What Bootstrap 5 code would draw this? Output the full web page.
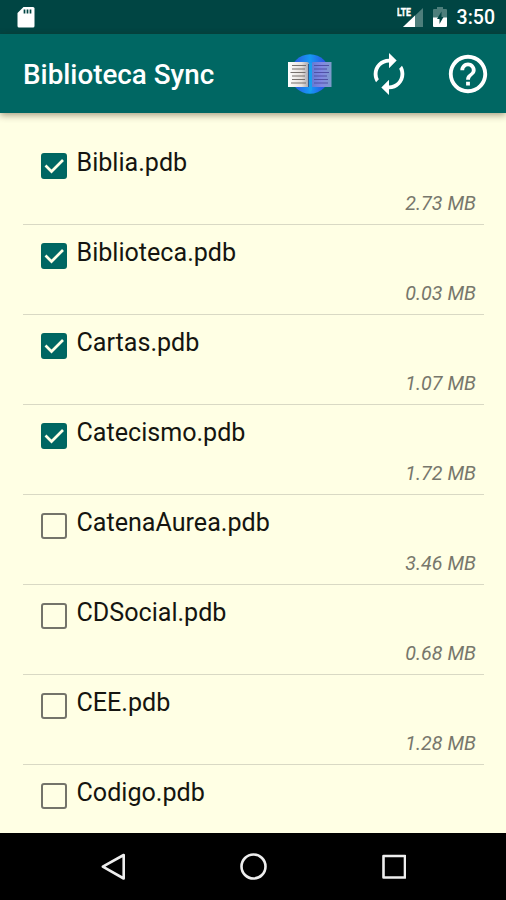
<!DOCTYPE html>
<html lang="es">
<head>
<meta charset="utf-8">
<meta name="viewport" content="width=device-width, initial-scale=1">
<title>Biblioteca Sync</title>
<link href="https://cdn.jsdelivr.net/npm/bootstrap@5.3.0/dist/css/bootstrap.min.css" rel="stylesheet">
<style>
body{font-family:Roboto,sans-serif;background:#ffffe4;height:900px}
svg{display:block;flex:none}
.status-bar{height:34px;background:#004543;padding:0 11px 0 17px}
.clock{font-size:19.5px;font-weight:500;line-height:34px;margin-left:9px;padding-top:2px}
.app-bar{height:79px;background:#006763;padding:0 15px 0 23px;z-index:1;box-shadow:0 2px 7px rgba(50,30,0,.45)}
.app-title{font-size:27.8px;font-weight:500;line-height:32px;padding-top:3px}
.refresh-icon{margin-left:33px}
.help-icon{margin-left:33px}
.file-list{padding:22px 22px 0 23px}
.file-row{height:90px;border-bottom:1px solid #d9d9c4;padding:10px 8px 0 17px}
.tick{appearance:none;width:26px;height:26px;margin:8px 9.5px 0 1px;border:2px solid #74746a;border-radius:3px;flex:none;background:center/24px 24px no-repeat}
.tick:checked{border-color:#00665f;background-color:#006763;background-image:url("data:image/svg+xml,%3Csvg xmlns='http://www.w3.org/2000/svg' viewBox='0 0 24 24'%3E%3Cpath d='M3.5 11.5l6 6L21 6' fill='none' stroke='%23ffffe8' stroke-width='2.7'/%3E%3C/svg%3E")}
.file-name{font-size:25.1px;line-height:36px;color:#151510}
.file-size{font-size:19.7px;line-height:24px;font-style:italic;color:#77776c;margin-top:11px}
.nav-bar{height:67px;padding-left:101px}
</style>
</head>
<body class="d-flex flex-column overflow-hidden m-0">
<div class="status-bar d-flex align-items-center text-white flex-shrink-0">
  <svg class="me-auto" width="18" height="21" viewBox="0 0 18 21"><path fill="#fff" d="M6.500 0H16a1.500 1.500 0 0 1 1.500 1.500V19A1.500 1.500 0 0 1 16 20.500H2A1.500 1.500 0 0 1 .5 19V6z"/><path d="M7.500 2.500v4m3-4v4m3-4v4" stroke="#004543" stroke-width="1.700"/></svg>
  <svg width="27" height="22" viewBox="0 0 27 22"><path d="M26 2v19H6z" fill="#4d7e7b"/><path d="M18 9.600V21H6z" fill="#fff"/><text x="0" y="10" fill="#fff" stroke="#fff" stroke-width=".4" font-family="Roboto" font-size="11" font-weight="700" textLength="14" lengthAdjust="spacingAndGlyphs">LTE</text></svg>
  <svg class="ms-2" width="16" height="22" viewBox="0 0 16 22"><path d="M5 1h6v2h3q1 0 1 1v8H1V4q0-1 1-1h3z" fill="#4d7e7b"/><path d="M1 11.500h14V20q0 1-1 1H2q-1 0-1-1z" fill="#fff"/><path d="M9.500 5.500L5 13h2.500v5l4-7H9.500z" fill="#004543"/></svg>
  <span class="clock">3:50</span>
</div>
<header class="app-bar d-flex align-items-center text-white flex-shrink-0">
  <h1 class="app-title m-0 me-auto">Biblioteca Sync</h1>
  <svg width="46" height="42" viewBox="0 0 46 42" role="img" aria-label="Biblioteca">
    <defs><linearGradient id="globe"><stop stop-color="#314be0"/><stop offset=".5" stop-color="#159af5"/><stop offset="1" stop-color="#303be0"/></linearGradient><linearGradient id="pageL"><stop stop-color="#fff"/><stop offset=".65" stop-color="#e5e0dc"/><stop offset="1" stop-color="#a5a4ae"/></linearGradient><linearGradient id="pageR"><stop stop-color="#617bd4"/><stop offset=".5" stop-color="#8287e2"/><stop offset="1" stop-color="#7d9bcb"/></linearGradient></defs>
    <circle cx="23" cy="21" r="19.800" fill="url(#globe)"/>
    <path d="M1 9h19q2 0 2 2v23H1z" fill="url(#pageL)"/><path d="M24.500 11q0-2 2-2H44.500v25h-20z" fill="url(#pageR)"/>
    <path d="M5 12.500h14M5 16h13M3.500 19.500h15M5 23h13M5 26.500h13M4 30h15" stroke="#77716d" stroke-width="1.100"/>
    <path d="M27 12.500h15M27 16h13M27 19.500h15M27 23h13M27 26.500h14M27 30h14" stroke="#5050a5" stroke-width="1"/>
    <path d="M22 10h3v27l-1.500 2-1.500-2z" fill="#18a0ee"/><path d="M21.500 11v23" stroke="#315b8d" stroke-width="1"/>
  </svg>
  <svg class="refresh-icon" width="46" height="46" viewBox="0 0 24 24" fill="#fff" role="img" aria-label="Sincronizar"><path d="M12 6v3l4-4-4-4v3c-4.420 0-8 3.580-8 8 0 1.570.46 3.030 1.240 4.260L6.700 14.800A5.870 5.870 0 0 1 6 12c0-3.310 2.690-6 6-6zm6.760 1.740L17.300 9.200c.44.84.7 1.790.7 2.800 0 3.310-2.690 6-6 6v-3l-4 4 4 4v-3c4.420 0 8-3.580 8-8 0-1.570-.46-3.030-1.240-4.260z"/></svg>
  <svg class="help-icon" width="46" height="46" viewBox="0 0 24 24" fill="#fff" role="img" aria-label="Ayuda"><path d="M11 18h2v-2h-2v2zm1-16C6.480 2 2 6.480 2 12s4.480 10 10 10 10-4.480 10-10S17.520 2 12 2zm0 18c-4.410 0-8-3.590-8-8s3.590-8 8-8 8 3.590 8 8-3.590 8-8 8zm0-14c-2.210 0-4 1.790-4 4h2c0-1.100.9-2 2-2s2 .9 2 2c0 2-3 1.750-3 5h2c0-2.250 3-2.500 3-5 0-2.210-1.790-4-4-4z"/></svg>
</header>
<main class="file-list flex-fill overflow-hidden">
  <div class="file-row"><label class="d-flex"><input class="tick" type="checkbox" checked><span class="file-name">Biblia.pdb</span></label><div class="file-size text-end">2.73 MB</div></div>
  <div class="file-row"><label class="d-flex"><input class="tick" type="checkbox" checked><span class="file-name">Biblioteca.pdb</span></label><div class="file-size text-end">0.03 MB</div></div>
  <div class="file-row"><label class="d-flex"><input class="tick" type="checkbox" checked><span class="file-name">Cartas.pdb</span></label><div class="file-size text-end">1.07 MB</div></div>
  <div class="file-row"><label class="d-flex"><input class="tick" type="checkbox" checked><span class="file-name">Catecismo.pdb</span></label><div class="file-size text-end">1.72 MB</div></div>
  <div class="file-row"><label class="d-flex"><input class="tick" type="checkbox"><span class="file-name">CatenaAurea.pdb</span></label><div class="file-size text-end">3.46 MB</div></div>
  <div class="file-row"><label class="d-flex"><input class="tick" type="checkbox"><span class="file-name">CDSocial.pdb</span></label><div class="file-size text-end">0.68 MB</div></div>
  <div class="file-row"><label class="d-flex"><input class="tick" type="checkbox"><span class="file-name">CEE.pdb</span></label><div class="file-size text-end">1.28 MB</div></div>
  <div class="file-row"><label class="d-flex"><input class="tick" type="checkbox"><span class="file-name">Codigo.pdb</span></label></div>
</main>
<nav class="nav-bar d-flex align-items-center bg-black flex-shrink-0" aria-label="Sistema">
  <svg width="305" height="28" viewBox="0 0 305 28" fill="none" stroke="#eee" stroke-width="2.600" stroke-linejoin="round"><path d="M22.700 2v23.500L1.800 13.700z"/><circle cx="152.500" cy="13.500" r="12"/><rect x="282.500" y="3" width="21.500" height="21.500"/></svg>
</nav>
<script src="https://cdn.jsdelivr.net/npm/bootstrap@5.3.0/dist/js/bootstrap.bundle.min.js"></script>
</body>
</html>
